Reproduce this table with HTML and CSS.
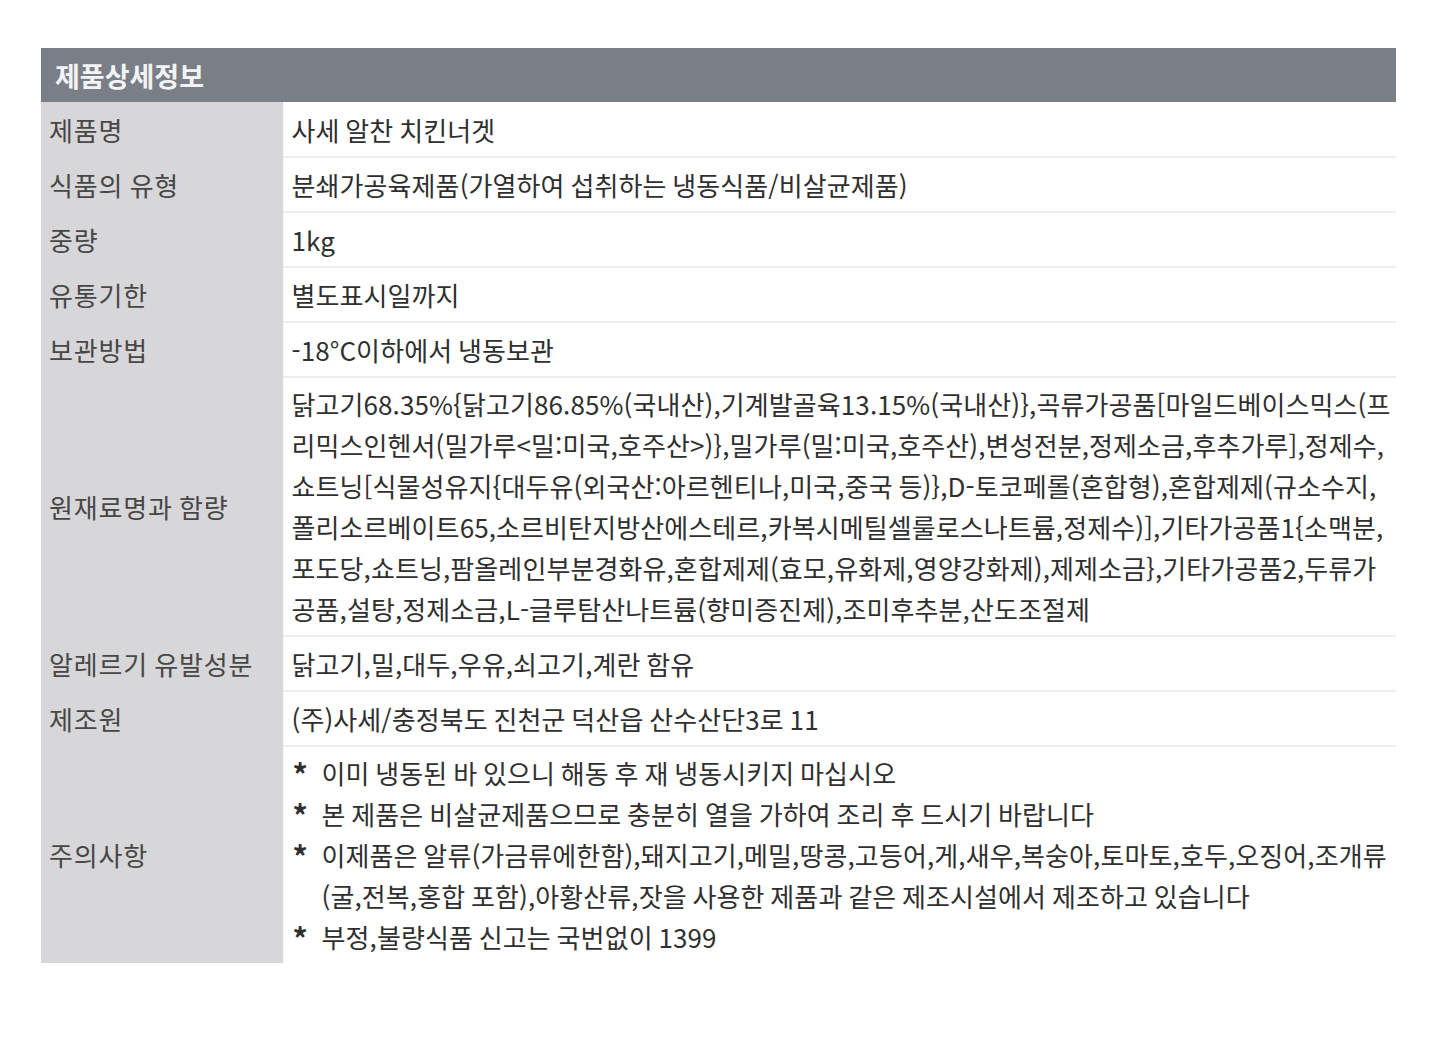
FILE: index.html
```html
<!DOCTYPE html>
<html lang="ko">
<head>
<meta charset="utf-8">
<title>제품상세정보</title>
<link rel="stylesheet" href="styles.css">
</head>
<body>
<div class="page">
  <table class="info">
    <colgroup>
      <col class="col-label">
      <col class="col-value">
    </colgroup>
    <thead>
      <tr><th colspan="2" class="head">제품상세정보</th></tr>
    </thead>
    <tbody>
      <tr><th>제품명</th><td>사세 알찬 치킨너겟</td></tr>
      <tr><th>식품의 유형</th><td>분쇄가공육제품(가열하여 섭취하는 냉동식품/비살균제품)</td></tr>
      <tr><th>중량</th><td>1kg</td></tr>
      <tr><th>유통기한</th><td>별도표시일까지</td></tr>
      <tr><th>보관방법</th><td>-18°C이하에서 냉동보관</td></tr>
      <tr><th>원재료명과 함량</th><td class="multi"><span class="ln">닭고기68.35%{닭고기86.85%(국내산),기계발골육13.15%(국내산)},곡류가공품[마일드베이스믹스(프</span><span class="ln">리믹스인헨서(밀가루&lt;밀:미국,호주산&gt;)},밀가루(밀:미국,호주산),변성전분,정제소금,후추가루],정제수,</span><span class="ln">쇼트닝[식물성유지{대두유(외국산:아르헨티나,미국,중국 등)},D-토코페롤(혼합형),혼합제제(규소수지,</span><span class="ln">폴리소르베이트65,소르비탄지방산에스테르,카복시메틸셀룰로스나트륨,정제수)],기타가공품1{소맥분,</span><span class="ln">포도당,쇼트닝,팜올레인부분경화유,혼합제제(효모,유화제,영양강화제),제제소금},기타가공품2,두류가</span><span class="ln">공품,설탕,정제소금,L-글루탐산나트륨(향미증진제),조미후추분,산도조절제</span></td></tr>
      <tr><th>알레르기 유발성분</th><td>닭고기,밀,대두,우유,쇠고기,계란 함유</td></tr>
      <tr><th>제조원</th><td>(주)사세/충정북도 진천군 덕산읍 산수산단3로 11</td></tr>
      <tr class="last"><th>주의사항</th><td class="multi">
        <ul class="notes">
          <li>이미 냉동된 바 있으니 해동 후 재 냉동시키지 마십시오</li>
          <li>본 제품은 비살균제품으므로 충분히 열을 가하여 조리 후 드시기 바랍니다</li>
          <li><span class="ln">이제품은 알류(가금류에한함),돼지고기,메밀,땅콩,고등어,게,새우,복숭아,토마토,호두,오징어,조개류</span><span class="ln">(굴,전복,홍합 포함),아황산류,잣을 사용한 제품과 같은 제조시설에서 제조하고 있습니다</span></li>
          <li>부정,불량식품 신고는 국번없이 1399</li>
        </ul>
      </td></tr>
    </tbody>
  </table>
</div>
</body>
</html>
```

FILE: styles.css
```css
html, body {
  margin: 0;
  padding: 0;
  background: #ffffff;
}

.page {
  padding: 48px 50px 0 41px;
  font-family: "Noto Sans CJK KR", "Noto Sans", sans-serif;
}

.info {
  width: 1355px;
  border-collapse: collapse;
  table-layout: fixed;
  font-size: 26px;
  line-height: 41px;
  letter-spacing: 0.1px;
  word-spacing: -1.6px;
}

.col-label {
  width: 242px;
}

.info .head {
  background: #7a7f87;
  color: #f4f4f6;
  font-weight: 700;
  font-size: 27px;
  text-align: left;
  height: 54px;
  padding: 0 0 0 14px;
  letter-spacing: 0;
}

.info tbody th {
  background: #d7d6d8;
  color: #474747;
  font-weight: 400;
  text-align: left;
  vertical-align: middle;
  padding: 6px 0 6px 8px;
  white-space: nowrap;
  letter-spacing: 0.8px;
}

.info tbody td {
  color: #2f2f2f;
  padding: 6px 6px 6px 8px;
  border-bottom: 2px solid #eeeeee;
  border-left: 1px solid #fafafa;
  vertical-align: middle;
  white-space: nowrap;
}

.info tbody tr:first-child td {
  padding-top: 7px;
}

.info tbody td.multi {
  padding-top: 5px;
  padding-bottom: 6px;
}

.info tbody tr.last td {
  border-bottom: none;
}

.ln {
  display: block;
}

.notes {
  list-style: none;
  margin: 0;
  padding: 0 0 0 30px;
}

.notes li {
  position: relative;
}

.notes li::before {
  content: "*";
  position: absolute;
  left: -29px;
  top: 1px;
  font-weight: 700;
  font-size: 30px;
  color: #2f2f2f;
}
```
